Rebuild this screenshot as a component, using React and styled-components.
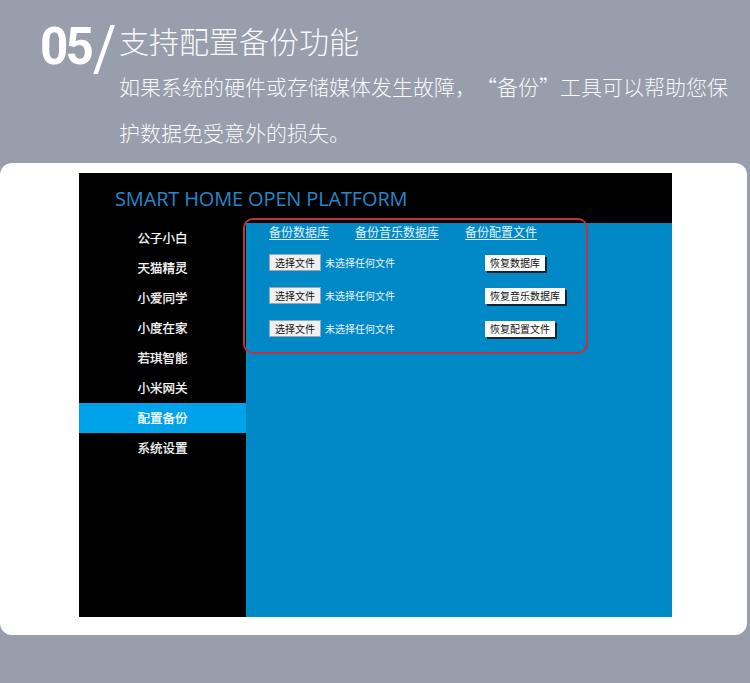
import React from "react";
import styled, { createGlobalStyle } from "styled-components";

const Global = createGlobalStyle`
  html, body { margin: 0; padding: 0; }
  body {
    background: #989eab;
    width: 750px;
    height: 683px;
    overflow: hidden;
    font-family: "Noto Sans CJK SC", "Noto Sans", sans-serif;
  }
`;

const Page = styled.div`
  width: 750px;
  height: 683px;
  background: #989eab;
`;

const Intro = styled.header`
  display: flex;
  align-items: flex-start;
  padding: 25px 0 0 40px;
`;

const Number = styled.div`
  display: flex;
  align-items: flex-start;
  width: 79px;
  color: #ffffff;
`;

const Digits = styled.span`
  font-family: Roboto, "Liberation Sans", sans-serif;
  font-weight: 700;
  font-size: 52px;
  line-height: 1;
  letter-spacing: -3px;
  margin-top: -4px;
  transform: scaleX(0.95);
  transform-origin: left top;
`;

const Slash = styled.span`
  font-family: Roboto, "Liberation Sans", sans-serif;
  font-weight: 400;
  font-size: 58px;
  line-height: 1;
  margin-left: -1px;
  margin-top: -6px;
  transform: scaleY(1.08);
`;

const IntroText = styled.div`
  display: flex;
  flex-direction: column;
  color: #f7f8fa;
`;

const Title = styled.h1`
  margin: 0;
  font-family: "Noto Sans CJK SC", sans-serif;
  font-weight: 300;
  font-size: 30px;
  line-height: 30px;
`;

const Lead = styled.p`
  margin: 8px 0 0;
  font-family: "Noto Sans CJK SC", sans-serif;
  font-weight: 300;
  font-size: 21px;
  line-height: 46px;
  width: 620px;
  text-spacing-trim: space-all;
`;

const Card = styled.section`
  margin-top: 8px;
  width: 747px;
  background: #ffffff;
  border-radius: 12px;
  padding: 10px 0 18px 79px;
  box-sizing: border-box;
`;

const Panel = styled.div`
  position: relative;
  width: 593px;
  height: 444px;
  background: #000000;
  display: flex;
  flex-direction: column;
`;

const PanelHeader = styled.div`
  height: 50px;
  flex-shrink: 0;
  display: flex;
  align-items: center;
  padding-left: 36px;
  padding-top: 1px;
  box-sizing: border-box;
  font-family: "Open Sans", "Noto Sans", sans-serif;
  font-size: 20px;
  letter-spacing: -0.15px;
  color: #2388cc;
`;

const Body = styled.div`
  flex: 1;
  display: flex;
`;

const Sidebar = styled.nav`
  width: 167px;
  background: #000000;
`;

const NavItem = styled.div`
  height: 30px;
  display: flex;
  align-items: center;
  justify-content: center;
  padding-bottom: 1px;
  box-sizing: border-box;
  font-size: 12.5px;
  font-weight: 400;
  -webkit-text-stroke: 0.25px #ffffff;
  color: #ffffff;
  background: ${(p) => (p.$active ? "#00a3ea" : "transparent")};
`;

const Main = styled.main`
  flex: 1;
  background: #0089c6;
  padding: 2px 0 0 23px;
`;

const Links = styled.div`
  display: flex;
  gap: 26px;
  height: 14px;
  align-items: center;
`;

const Link = styled.a`
  font-size: 12px;
  line-height: 14px;
  color: #e4f2fb;
  text-decoration: underline;
  text-underline-offset: 2px;
`;

const Rows = styled.div`
  margin-top: 15px;
  display: flex;
  flex-direction: column;
  gap: 16px;
`;

const Row = styled.div`
  display: grid;
  grid-template-columns: 216px auto;
  align-items: center;
  height: 17px;
`;

const FilePick = styled.div`
  display: flex;
  align-items: center;
  gap: 4px;
`;

const FileButton = styled.span`
  display: inline-flex;
  align-items: center;
  height: 17px;
  padding: 0 5px;
  background: #f0f0f0;
  border: 1px solid #9aa6b0;
  box-sizing: border-box;
  font-size: 10px;
  color: #111;
`;

const FileHint = styled.span`
  font-size: 10px;
  color: #eaf5fc;
`;

const RestoreButton = styled.span`
  justify-self: start;
  display: inline-flex;
  align-items: center;
  height: 16px;
  padding: 0 5px;
  background: #ffffff;
  font-size: 10px;
  color: #111;
  box-shadow: 2px 2px 0 #0b2436;
`;

const Highlight = styled.div`
  position: absolute;
  left: 164px;
  top: 45px;
  width: 345px;
  height: 136px;
  box-sizing: border-box;
  border: 2px solid #c3313c;
  border-radius: 10px;
  pointer-events: none;
`;

const nav = ["公子小白", "天猫精灵", "小爱同学", "小度在家", "若琪智能", "小米网关", "配置备份", "系统设置"];
const rows = ["恢复数据库", "恢复音乐数据库", "恢复配置文件"];

export default function App() {
  return (
    <Page>
      <Global />
      <Intro>
        <Number>
          <Digits>05</Digits>
          <Slash>/</Slash>
        </Number>
        <IntroText>
          <Title>支持配置备份功能</Title>
          <Lead lang="zh-CN">如果系统的硬件或存储媒体发生故障，“备份”工具可以帮助您保护数据免受意外的损失。</Lead>
        </IntroText>
      </Intro>
      <Card>
        <Panel>
          <PanelHeader>SMART HOME OPEN PLATFORM</PanelHeader>
          <Body>
            <Sidebar>
              {nav.map((n) => (
                <NavItem key={n} $active={n === "配置备份"}>{n}</NavItem>
              ))}
            </Sidebar>
            <Main>
              <Links>
                <Link>备份数据库</Link>
                <Link>备份音乐数据库</Link>
                <Link>备份配置文件</Link>
              </Links>
              <Rows>
                {rows.map((r) => (
                  <Row key={r}>
                    <FilePick>
                      <FileButton>选择文件</FileButton>
                      <FileHint>未选择任何文件</FileHint>
                    </FilePick>
                    <RestoreButton>{r}</RestoreButton>
                  </Row>
                ))}
              </Rows>
            </Main>
          </Body>
          <Highlight />
        </Panel>
      </Card>
    </Page>
  );
}
